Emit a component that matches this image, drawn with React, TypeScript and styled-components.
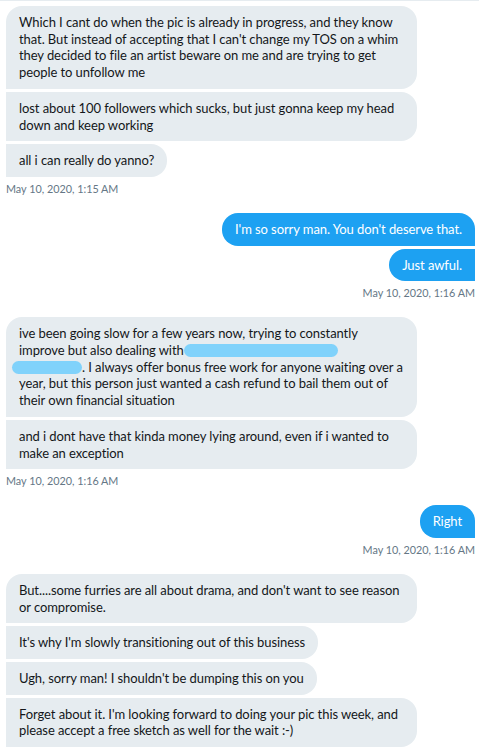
import React from "react";
import styled, { createGlobalStyle } from "styled-components";

const GlobalStyle = createGlobalStyle`
  html, body {
    margin: 0;
    padding: 0;
    background: #fff;
  }
  body {
    font-family: Lato, "Open Sans", sans-serif;
  }
`;

const Thread = styled.div`
  display: flex;
  flex-direction: column;
  width: 479px;
  box-sizing: border-box;
  padding: 5px 4px 0 6px;
  border-top: 1px solid #e6ecf0;
`;

const Group = styled.div<{ $mine?: boolean }>`
  display: flex;
  flex-direction: column;
  align-items: ${(p) => (p.$mine ? "flex-end" : "flex-start")};
  gap: 3px;
  margin-bottom: 16px;
`;

const Bubble = styled.div<{ $mine?: boolean; $first?: boolean }>`
  box-sizing: border-box;
  max-width: 411px;
  padding: 8px 13px 8px 13px;
  font-size: 13px;
  line-height: 16.7px;
  letter-spacing: -0.08px;
  color: ${(p) => (p.$mine ? "#fff" : "#14171a")};
  background: ${(p) => (p.$mine ? "#1da1f2" : "#e6ecf0")};
  border-radius: ${(p) =>
    p.$mine
      ? p.$first
        ? "16px 16px 0 16px"
        : "16px 0 0 16px"
      : p.$first
      ? "16px 16px 16px 0"
      : "0 16px 16px 0"};
`;

const Stamp = styled.div`
  margin-top: 1px;
  font-size: 10.8px;
  line-height: 16px;
  color: #657786;
`;

const Keep = styled.span`
  white-space: nowrap;
`;

const Redact = styled.span<{ $w: number; $pull?: number }>`
  display: inline-block;
  width: ${(p) => p.$w}px;
  height: 13px;
  margin-left: ${(p) => p.$pull ?? 0}px;
  vertical-align: -2px;
  background: #80d2fb;
  border-radius: 7px;
`;

type Msg = { mine?: boolean; texts: React.ReactNode[]; time: string };

const thread: Msg[] = [
  {
    texts: [
      "Which I cant do when the pic is already in progress, and they know that. But instead of accepting that I can't change my TOS on a whim they decided to file an artist beware on me and are trying to get people to unfollow me",
      "lost about 100 followers which sucks, but just gonna keep my head down and keep working",
      "all i can really do yanno?",
    ],
    time: "May 10, 2020, 1:15 AM",
  },
  {
    mine: true,
    texts: ["I'm so sorry man. You don't deserve that.", "Just awful."],
    time: "May 10, 2020, 1:16 AM",
  },
  {
    texts: [
      <>
        ive been going slow for a few years now, trying to constantly improve
        but also dealing with
        <Redact $w={154} />{" "}
        <Keep>
          <Redact $w={70} $pull={-7} />. I
        </Keep>{" "}
        always offer bonus free work for anyone waiting over a year, but this
        person just wanted a cash refund to bail them out of their own
        financial situation
      </>,
      "and i dont have that kinda money lying around, even if i wanted to make an exception",
    ],
    time: "May 10, 2020, 1:16 AM",
  },
  {
    mine: true,
    texts: ["Right"],
    time: "May 10, 2020, 1:16 AM",
  },
  {
    texts: [
      "But....some furries are all about drama, and don't want to see reason or compromise.",
      "It's why I'm slowly transitioning out of this business",
      "Ugh, sorry man! I shouldn't be dumping this on you",
      "Forget about it. I'm looking forward to doing your pic this week, and please accept a free sketch as well for the wait :-)",
    ],
    time: "",
  },
];

export default function App() {
  return (
    <>
      <GlobalStyle />
      <Thread>
        {thread.map((m, i) => (
          <Group key={i} $mine={m.mine}>
            {m.texts.map((t, j) => (
              <Bubble key={j} $mine={m.mine} $first={j === 0}>
                {t}
              </Bubble>
            ))}
            {m.time && <Stamp>{m.time}</Stamp>}
          </Group>
        ))}
      </Thread>
    </>
  );
}
